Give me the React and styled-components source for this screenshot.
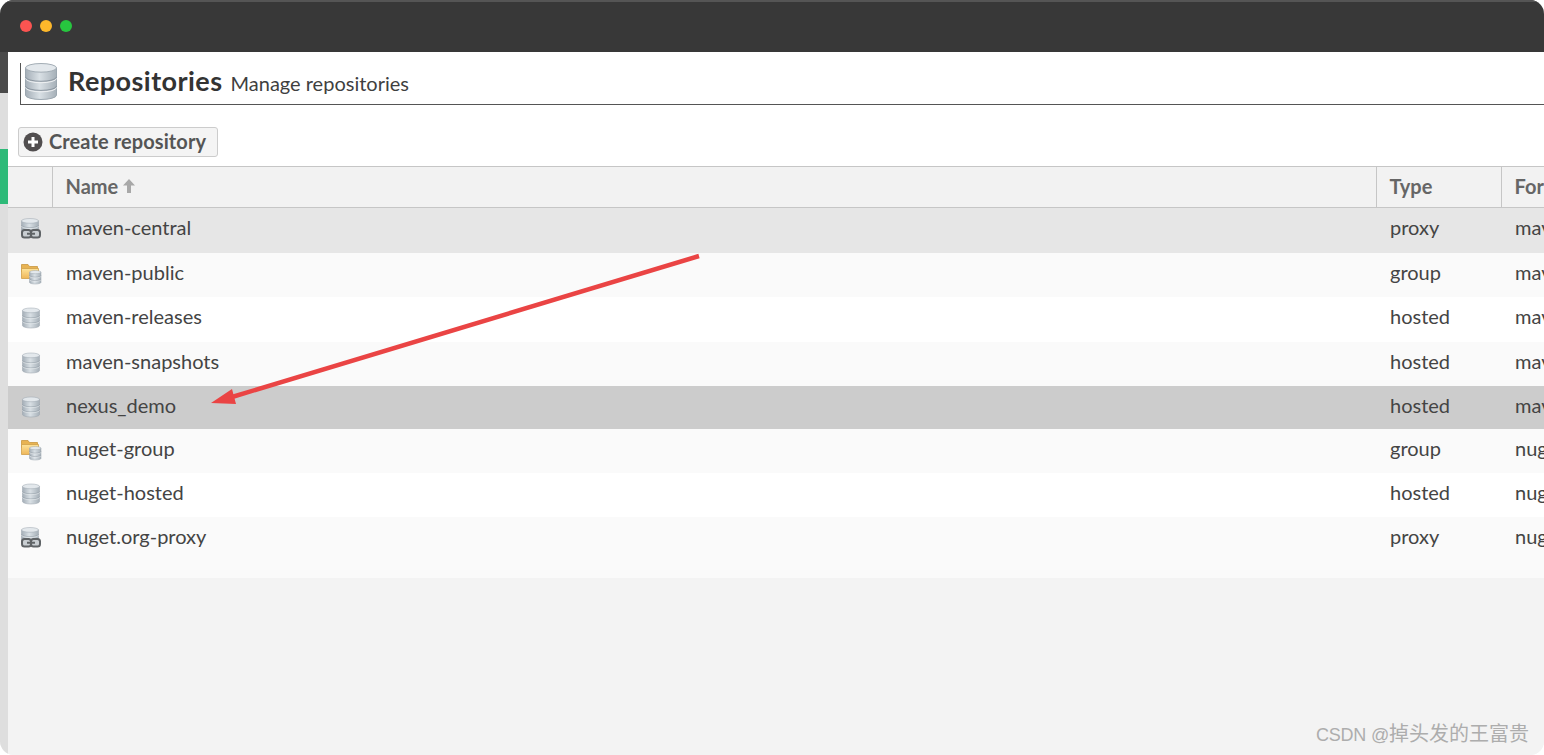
import React from "react";
import styled, { createGlobalStyle } from "styled-components";

const repositories = [
  { name: "maven-central", type: "proxy", format: "maven2", height: 45, tone: "#e6e6e6" },
  { name: "maven-public", type: "group", format: "maven2", height: 44, tone: "#fafafa" },
  { name: "maven-releases", type: "hosted", format: "maven2", height: 45, tone: "#ffffff" },
  { name: "maven-snapshots", type: "hosted", format: "maven2", height: 44, tone: "#fafafa" },
  { name: "nexus_demo", type: "hosted", format: "maven2", height: 43, tone: "#cccccc" },
  { name: "nuget-group", type: "group", format: "nuget", height: 44, tone: "#fafafa" },
  { name: "nuget-hosted", type: "hosted", format: "nuget", height: 44, tone: "#ffffff" },
  { name: "nuget.org-proxy", type: "proxy", format: "nuget", height: 61, tone: "#fafafa" },
];

const GlobalStyle = createGlobalStyle`
  html, body {
    margin: 0;
    padding: 0;
    background: #ffffff;
    overflow: hidden;
  }
  * { box-sizing: border-box; }
`;

const Frame = styled.div`
  position: relative;
  width: 1544px;
  height: 755px;
  display: flex;
  flex-direction: column;
  overflow: hidden;
  border-radius: 14px;
  font-family: Lato, "Open Sans", "Liberation Sans", sans-serif;
  background: #f3f3f3;
`;

const TitleBar = styled.div`
  height: 52px;
  flex: none;
  display: flex;
  align-items: center;
  gap: 8px;
  padding: 0 0 2px 20px;
  background: #383838;
  border-top: 2px solid #555555;
`;

const Light = styled.span`
  width: 12px;
  height: 12px;
  border-radius: 50%;
  background: ${(p) => p.$color};
`;

const Body = styled.div`
  flex: 1;
  display: flex;
  min-height: 0;
`;

const SideStrip = styled.div`
  width: 8px;
  flex: none;
  background: #dedede;
  display: flex;
  flex-direction: column;
`;

const StripDark = styled.div`
  height: 41px;
  background: #4a4a4a;
`;

const StripGreen = styled.div`
  height: 55px;
  margin-top: 56px;
  background: #2dba78;
`;

const Main = styled.div`
  flex: 1;
  min-width: 0;
  display: flex;
  flex-direction: column;
  background: #f3f3f3;
`;

const Top = styled.div`
  background: #ffffff;
  padding: 11px 0 9px 10px;
`;

const PageHeader = styled.div`
  height: 42px;
  display: flex;
  align-items: flex-start;
  margin-left: 2px;
  padding-left: 4px;
  border-left: 1px solid #555555;
  border-bottom: 1px solid #555555;
`;

const PageIcon = styled.div`
  width: 32px;
  height: 37px;
  flex: none;
  margin-right: 11px;
`;

const PageTitle = styled.h1`
  margin: 0 8px 0 0;
  font-size: 27px;
  line-height: 36px;
  font-weight: 700;
  letter-spacing: 0.45px;
  color: #333333;
`;

const PageSubtitle = styled.span`
  font-size: 20px;
  line-height: 40px;
  color: #3f3f3f;
`;

const CreateButton = styled.button`
  display: flex;
  align-items: center;
  gap: 6px;
  width: 200px;
  height: 30px;
  margin-top: 22px;
  padding: 0 0 2px 4px;
  background: #f4f4f4;
  border: 1px solid #cccccc;
  border-radius: 3px;
  font-family: inherit;
  font-size: 20px;
  font-weight: 700;
  letter-spacing: 0.1px;
  color: #555555;
`;

const Grid = styled.table`
  width: 1640px;
  table-layout: fixed;
  border-collapse: collapse;
`;

const HeadRow = styled.tr`
  height: 41px;
  background: #f2f2f2;
  border-top: 1px solid #c6c6c6;
  border-bottom: 1px solid #c6c6c6;
`;

const HeadCell = styled.th`
  width: ${(p) => p.$width}px;
  padding: 0 13px 2px;
  border-right: 1px solid #c6c6c6;
  text-align: left;
  font-size: 20px;
  font-weight: 700;
  color: #666666;
  white-space: nowrap;
`;

const NameLabel = styled.span`
  display: inline-flex;
  align-items: center;
  gap: 4px;
`;

const Row = styled.tr`
  height: ${(p) => p.$height}px;
  background: ${(p) => p.$tone};
`;

const Cell = styled.td`
  padding: 8px 13px 0 14px;
  vertical-align: top;
  font-size: 20px;
  line-height: 22px;
  color: #444444;
  white-space: nowrap;
`;

const IconCell = styled.td`
  padding: 10px 0 0 12px;
  vertical-align: top;
`;

const Overlay = styled.svg`
  position: absolute;
  left: 0;
  top: 0;
  pointer-events: none;
`;

const Watermark = styled.div`
  position: absolute;
  right: 15px;
  bottom: 7px;
  font-family: "Liberation Sans", "Noto Sans CJK SC", sans-serif;
  font-size: 20px;
  line-height: 26px;
  color: #adadad;
`;

const WatermarkLatin = styled.span`
  font-size: 18px;
  letter-spacing: -0.2px;
`;

const Defs = () => (
  <svg width="0" height="0" style={{ position: "absolute" }}>
    <defs>
      <linearGradient id="dbBody" x1="0" y1="0" x2="1" y2="0">
        <stop offset="0" stopColor="#a4aeb7" />
        <stop offset="0.45" stopColor="#d9e0e5" />
        <stop offset="1" stopColor="#a6b0b8" />
      </linearGradient>
      <linearGradient id="folderFill" x1="0" y1="0" x2="0" y2="1">
        <stop offset="0" stopColor="#fde39a" />
        <stop offset="1" stopColor="#efb658" />
      </linearGradient>
    </defs>
  </svg>
);

// cylinder stack used by the big header icon and the row icons
const Cylinder = ({ x = 0, y = 0, w = 32, h = 36 }) => {
  const ry = w * 0.14;
  const rx = w / 2;
  const band = (h - ry * 2) / 3;
  const line = Math.max(w / 32, 0.5);
  return (
    <g transform={`translate(${x} ${y})`}>
      <path
        d={`M0 ${ry}V${h - ry}a${rx} ${ry} 0 0 0 ${w} 0V${ry}z`}
        fill="url(#dbBody)"
        stroke="#9aa5ae"
        strokeWidth={line}
      />
      {[1, 2].map((i) => (
        <g key={i}>
          <path
            d={`M0 ${ry + band * i}a${rx} ${ry} 0 0 0 ${w} 0`}
            fill="none"
            stroke="#8a959f"
            strokeWidth={line}
          />
          <path
            d={`M0 ${ry + band * i + line * 1.5}a${rx} ${ry} 0 0 0 ${w} 0`}
            fill="none"
            stroke="#eef1f3"
            strokeWidth={line}
          />
        </g>
      ))}
      <ellipse cx={rx} cy={ry} rx={rx} ry={ry} fill="#e3e8ec" stroke="#a0aab3" strokeWidth={line} />
    </g>
  );
};

const RepoIcon = ({ type }) => (
  <svg width="22" height="22" viewBox="0 0 22 22">
    {type === "hosted" && <Cylinder x={2.5} y={1} w={17} h={20} />}
    {type === "proxy" && (
      <>
        <Cylinder x={1.5} y={0.5} w={17} h={18} />
        <rect x="2" y="12" width="9" height="7.5" rx="2.5" fill="#c9ced2" stroke="#5f6366" strokeWidth="2" />
        <rect x="11" y="12" width="9" height="7.5" rx="2.5" fill="#c9ced2" stroke="#5f6366" strokeWidth="2" />
        <path d="M7 15.75h8" stroke="#5f6366" strokeWidth="2" />
      </>
    )}
    {type === "group" && (
      <>
        <path d="M1.5 1.5h6.5l1.5 2h8v5H1.5z" fill="#e8b352" stroke="#c9973f" strokeWidth="0.8" />
        <path d="M1.5 15.5V5.5h17v10z" fill="url(#folderFill)" stroke="#cfa04a" strokeWidth="0.8" />
        <Cylinder x={9.5} y={7.5} w={11.5} h={13.5} />
      </>
    )}
  </svg>
);

const App = () => (
  <Frame>
    <GlobalStyle />
    <Defs />
    <TitleBar>
      <Light $color="#fb5451" />
      <Light $color="#fdb82b" />
      <Light $color="#27c63f" />
    </TitleBar>
    <Body>
      <SideStrip>
        <StripDark />
        <StripGreen />
      </SideStrip>
      <Main>
        <Top>
          <PageHeader>
            <PageIcon>
              <svg width="32" height="37" viewBox="0 0 32 37">
                <Cylinder x={0.5} y={0.5} w={31} h={36} />
              </svg>
            </PageIcon>
            <PageTitle>Repositories</PageTitle>
            <PageSubtitle>Manage repositories</PageSubtitle>
          </PageHeader>
          <CreateButton>
            <svg width="20" height="20" viewBox="0 0 20 20" style={{ marginTop: 2 }}>
              <circle cx="10" cy="10" r="9.5" fill="#514e4f" />
              <path d="M10 5v10M5 10h10" stroke="#ffffff" strokeWidth="3" />
            </svg>
            Create repository
          </CreateButton>
        </Top>
        <Grid>
          <thead>
            <HeadRow>
              <HeadCell $width={44} />
              <HeadCell $width={1324}>
                <NameLabel>
                  Name
                  <svg width="14" height="16" viewBox="0 0 14 16">
                    <path d="M7 1L13 7.5H9V15H5V7.5H1z" fill="#a8a8a8" />
                  </svg>
                </NameLabel>
              </HeadCell>
              <HeadCell $width={125}>Type</HeadCell>
              <HeadCell $width={147}>Format</HeadCell>
            </HeadRow>
          </thead>
          <tbody>
            {repositories.map((repo) => (
              <Row key={repo.name} $height={repo.height} $tone={repo.tone}>
                <IconCell>
                  <RepoIcon type={repo.type} />
                </IconCell>
                <Cell>{repo.name}</Cell>
                <Cell>{repo.type}</Cell>
                <Cell>{repo.format}</Cell>
              </Row>
            ))}
          </tbody>
        </Grid>
      </Main>
    </Body>
    <Overlay width="1544" height="755" viewBox="0 0 1544 755">
      <path d="M699 256L232 397" stroke="#ea4444" strokeWidth="4.5" fill="none" />
      <path d="M211 403L232 389L236 404z" fill="#ea4444" />
    </Overlay>
    <Watermark>
      <WatermarkLatin>CSDN @</WatermarkLatin>掉头发的王富贵
    </Watermark>
  </Frame>
);

export default App;
